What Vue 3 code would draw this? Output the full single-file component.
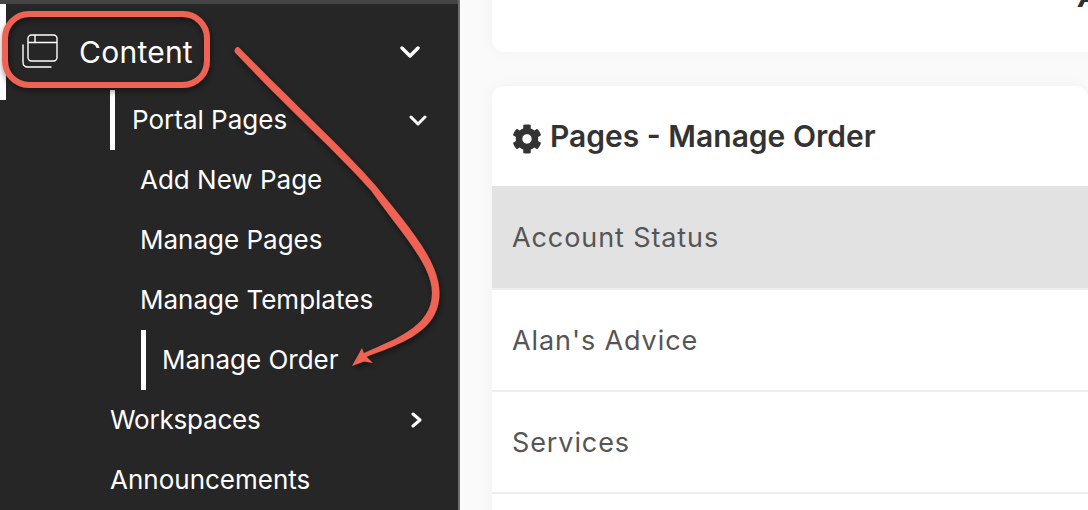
<script setup>
const cards = ['Account Status', "Alan's Advice", 'Services']
</script>

<template>
  <div class="page">
    <aside class="side">
      <div class="strip"></div>
      <div class="row top">
        <svg class="winicon" width="38" height="36" viewBox="0 0 38 36" fill="none" stroke="#fff" stroke-width="1.4">
          <rect x="7" y="1" width="29" height="26" rx="3.5" />
          <path d="M7 8.5H36M14 1V8.5" />
          <path d="M2 11V28.5C2 31 4 33 6.5 33H30" stroke-linecap="round" />
        </svg>
        <span class="toplabel">Content</span>
        <svg class="chev bigchev" width="20" height="12" viewBox="0 0 20 12" fill="none" stroke="#fff" stroke-width="3.4" stroke-linecap="round" stroke-linejoin="round"><path d="M2 2L10 10L18 2" /></svg>
      </div>
      <div class="sub">
        <div class="row item active first">
          <span>Portal Pages</span>
          <svg class="chev smallchev" width="18" height="11" viewBox="0 0 18 11" fill="none" stroke="#fff" stroke-width="3" stroke-linecap="round" stroke-linejoin="round"><path d="M2 2L9 9L16 2" /></svg>
        </div>
        <div class="row item deep">Add New Page</div>
        <div class="row item deep">Manage Pages</div>
        <div class="row item deep">Manage Templates</div>
        <div class="row item deep active second"><span>Manage Order</span></div>
        <div class="row item">
          <span class="tight">Workspaces</span>
          <svg class="chev rightchev" width="11" height="16" viewBox="0 0 11 16" fill="none" stroke="#fff" stroke-width="3" stroke-linecap="round" stroke-linejoin="round"><path d="M2 2L9 8L2 14" /></svg>
        </div>
        <div class="row item">Announcements</div>
      </div>
    </aside>
    <main class="main">
      <section class="card first-card"><span class="corner">A</span></section>
      <section class="card list-card">
        <header class="head">
          <svg class="gear" width="30" height="30" viewBox="0 0 512 512" fill="#333"><path d="M487.4 315.7l-42.6-24.6c4.3-23.2 4.3-47 0-70.2l42.6-24.6c4.9-2.8 7.1-8.6 5.5-14-11.1-35.6-30-67.8-54.7-94.6-3.8-4.1-10-5.1-14.8-2.3L380.8 110c-17.9-15.4-38.5-27.3-60.8-35.1V25.8c0-5.6-3.9-10.5-9.4-11.7-36.7-8.2-74.3-7.8-109.2 0-5.5 1.2-9.4 6.1-9.4 11.7V75c-22.2 7.9-42.8 19.8-60.8 35.1L88.7 85.5c-4.9-2.8-11-1.9-14.8 2.3-24.7 26.7-43.6 58.9-54.7 94.6-1.7 5.4.6 11.2 5.5 14L67.3 221c-4.3 23.2-4.3 47 0 70.2l-42.6 24.6c-4.9 2.8-7.1 8.6-5.5 14 11.1 35.6 30 67.8 54.7 94.6 3.8 4.1 10 5.1 14.8 2.3l42.6-24.6c17.9 15.4 38.5 27.3 60.8 35.1v49.2c0 5.6 3.9 10.5 9.4 11.7 36.7 8.2 74.3 7.8 109.2 0 5.5-1.2 9.4-6.1 9.4-11.7v-49.2c22.2-7.9 42.8-19.8 60.8-35.1l42.6 24.6c4.9 2.8 11 1.9 14.8-2.3 24.7-26.7 43.6-58.9 54.7-94.6 1.5-5.5-.7-11.3-5.6-14.1zM256 336c-44.1 0-80-35.9-80-80s35.9-80 80-80 80 35.9 80 80-35.9 80-80 80z" /></svg>
          <h1>Pages - Manage Order</h1>
        </header>
        <div v-for="(c, i) in cards" :key="c" class="li" :class="{ on: i === 0 }">{{ c }}</div>
      </section>
    </main>
    <svg class="note" width="1088" height="510" viewBox="0 0 1088 510" fill="none">
      <defs>
        <filter id="sh" x="-20%" y="-20%" width="140%" height="140%">
          <feDropShadow dx="1" dy="3" stdDeviation="3" flood-color="#000" flood-opacity="0.5" />
        </filter>
      </defs>
      <g filter="url(#sh)">
        <rect x="5" y="14" width="202" height="71" rx="24" stroke="#ee6352" stroke-width="6" />
        <path d="M239 47.5C292 102 342 147 376 186C410 228 439.500 262 439.500 293C439.500 334 396 345 361 359L358.500 355.500C392 340 432 328 432 293C432 265 402 234 371 190.500C337 152 287 108 235 52.500C233 50 237 45.500 239 47.500Z" fill="#ee6352" />
        <path d="M352 366L362 348L364.500 355L373 363L364 361.500Z" fill="#ee6352" />
      </g>
    </svg>
  </div>
</template>

<style>
html, body { margin: 0; background: #fafafa; }
</style>

<style scoped>
.page {
  position: relative;
  display: flex;
  width: 1088px;
  height: 510px;
  overflow: hidden;
  font-family: Inter, "Noto Sans", sans-serif;
  background: #fafafa;
}
.side {
  flex: 0 0 458px;
  height: 510px;
  background: #262626;
  border-right: 2px solid #6e6e6e;
  color: #fff;
  overflow: hidden;
}
.strip { height: 4px; background: #454545; }
.row {
  position: relative;
  display: flex;
  align-items: center;
  height: 60px;
  box-sizing: border-box;
}
.top { height: 96px; padding-left: 22px; }
.top::before {
  content: "";
  position: absolute;
  left: 0;
  top: 0;
  bottom: 0;
  width: 6px;
  background: #fff;
}
.winicon { margin-top: -1px; margin-left: -1px; }
.toplabel { margin-left: 20px; font-size: 30px; letter-spacing: 0.25px; }
.chev { position: absolute; }
.bigchev { left: 400px; top: 42px; }
.smallchev { left: 409px; top: 25px; }
.rightchev { left: 411px; top: 22px; }
.sub { margin-top: -10px; }
.item { padding: 0 0 2px 110px; font-size: 26px; }
.tight { letter-spacing: -0.2px; }
.deep { padding-left: 140px; }
.active::before {
  content: "";
  position: absolute;
  top: 0;
  bottom: 0;
  width: 5px;
  background: #fff;
}
.first { padding-left: 132px; }
.first::before { left: 110px; }
.second { padding-left: 162px; }
.second::before { left: 141px; }
.main { flex: 1; min-width: 0; padding-left: 32px; }
.card {
  background: #fff;
  border-radius: 12px;
  box-shadow: 0 0 14px rgba(0, 0, 0, 0.04);
}
.first-card {
  position: relative;
  width: 620px;
  height: 72px;
  margin-top: -20px;
}
.corner {
  position: absolute;
  left: 586px;
  top: 0;
  font-size: 28px;
  font-style: italic;
  font-weight: 700;
  line-height: 34px;
  color: #2a2f3a;
}
.list-card {
  width: 596px;
  height: 440px;
  margin-top: 34px;
  overflow: hidden;
}
.head {
  display: flex;
  align-items: center;
  gap: 8px;
  height: 100px;
  padding-left: 20px;
}
.gear { flex: none; margin-top: 5px; }
h1 {
  margin: 0;
  font-size: 30px;
  font-weight: 600;
  color: #333;
}
.li {
  display: flex;
  align-items: center;
  height: 102px;
  padding-left: 20px;
  box-sizing: border-box;
  border-bottom: 2px solid #eee;
  font-size: 27px;
  letter-spacing: 0.9px;
  color: #555;
}
.on { height: 104px; background: #e2e2e2; background-clip: padding-box; }
.note { position: absolute; left: 0; top: 0; pointer-events: none; }
</style>
